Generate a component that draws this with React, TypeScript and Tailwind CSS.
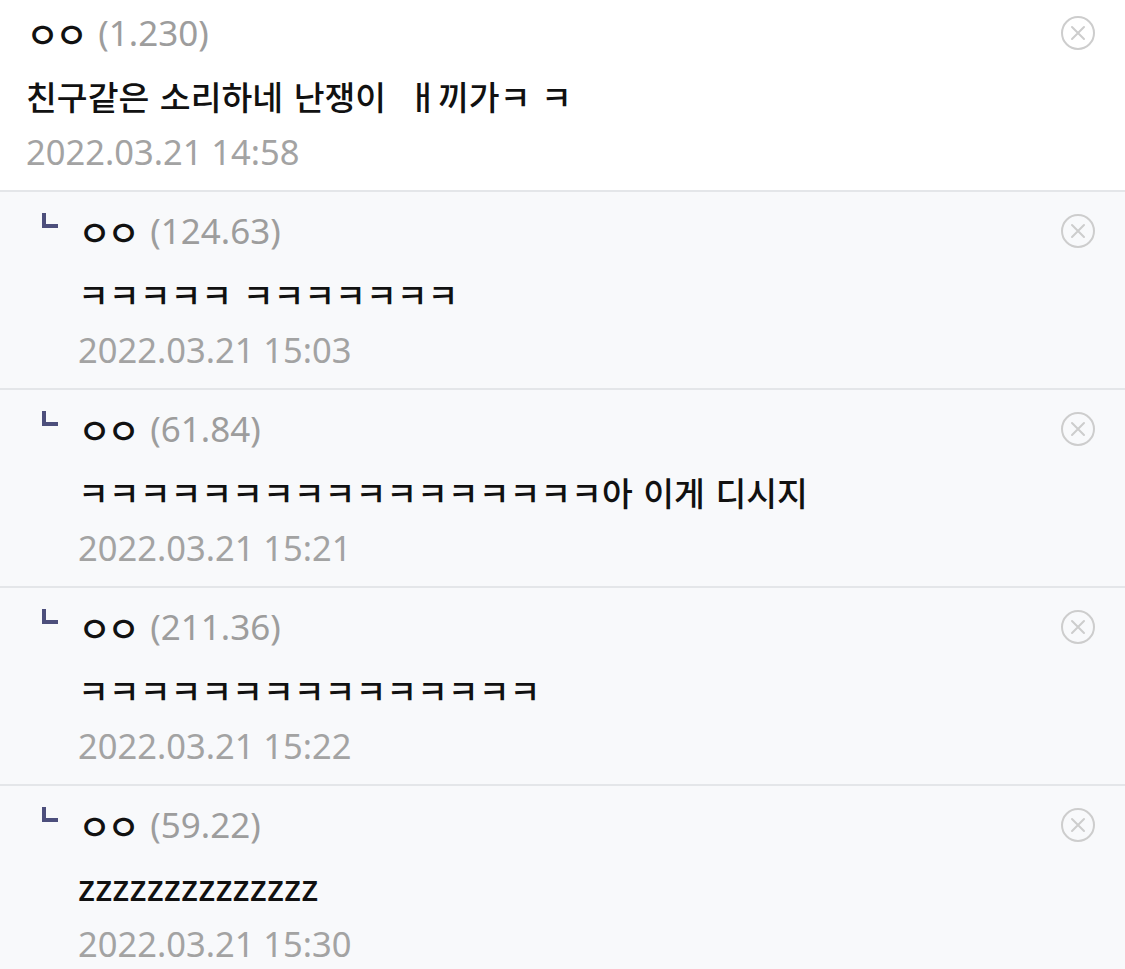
import React from 'react';

type Comment = {
  score: string;
  body: string;
  date: string;
  latin?: boolean;
};

const parent: Comment = {
  score: '(1.230)',
  body: '친구같은 소리하네 난쟁이\u00a0 ㅐ끼가ㅋ ㅋ',
  date: '2022.03.21 14:58',
};

const replies: Comment[] = [
  { score: '(124.63)', body: 'ㅋㅋㅋㅋㅋ ㅋㅋㅋㅋㅋㅋㅋ', date: '2022.03.21 15:03' },
  { score: '(61.84)', body: 'ㅋㅋㅋㅋㅋㅋㅋㅋㅋㅋㅋㅋㅋㅋㅋㅋㅋ아 이게 디시지', date: '2022.03.21 15:21' },
  { score: '(211.36)', body: 'ㅋㅋㅋㅋㅋㅋㅋㅋㅋㅋㅋㅋㅋㅋㅋ', date: '2022.03.21 15:22' },
  { score: '(59.22)', body: 'zzzzzzzzzzzzzz', date: '2022.03.21 15:30', latin: true },
];

function DeleteIcon() {
  return (
    <svg width="36" height="36" viewBox="0 0 36 36" fill="none" stroke="#cdcdcd" strokeWidth="2">
      <circle cx="18" cy="18" r="16" />
      <path d="M12 12 L24 24 M24 12 L12 24" strokeLinecap="round" />
    </svg>
  );
}

function CommentBody({ c }: { c: Comment }) {
  return (
    <div className="flex-1">
      <div className="h-[50px] flex items-center">
        <span className="text-[36px] font-medium text-[#111] tracking-[-4px] font-['Noto_Sans_CJK_KR',sans-serif]">ㅇㅇ</span>
        <span className="ml-[14px] text-[35px] text-[#9d9d9d] font-['Noto_Sans',sans-serif]">{c.score}</span>
      </div>
      <div
        className={
          c.latin
            ? "mt-[13px] h-[50px] flex items-center text-[36px] font-medium text-[#111] font-['Noto_Sans',sans-serif]"
            : "mt-[13px] h-[50px] flex items-center text-[33.5px] font-medium text-[#111] [word-spacing:3px] font-['Noto_Sans_CJK_KR',sans-serif] whitespace-pre"
        }
      >
        {c.body}
      </div>
      <div className="mt-[6px] h-[50px] flex items-center text-[34.5px] text-[#a3a3a3] font-['Noto_Sans',sans-serif]">
        {c.date}
      </div>
    </div>
  );
}

export default function App() {
  return (
    <div className="w-[1125px] h-[969px] overflow-hidden bg-[#f8f9fb]">
      {/* parent comment */}
      <div className="bg-white border-b-2 border-[#e4e6e9] h-[192px] flex pl-[26px] pr-[29px] pt-[8px]">
        <CommentBody c={parent} />
        <div className="pt-[7px]">
          <DeleteIcon />
        </div>
      </div>

      {/* replies */}
      {replies.map((r, i) => (
        <div key={i} className="h-[198px] border-b-2 border-[#e4e6e9] flex pr-[29px] pt-[14px]">
          <div className="w-[78px] pl-[42px] pt-[7px] shrink-0">
            <div className="w-[16px] h-[15px] border-l-[4px] border-b-[4px] border-[#4d4f7c]" />
          </div>
          <CommentBody c={r} />
          <div className="pt-[7px]">
            <DeleteIcon />
          </div>
        </div>
      ))}
    </div>
  );
}
